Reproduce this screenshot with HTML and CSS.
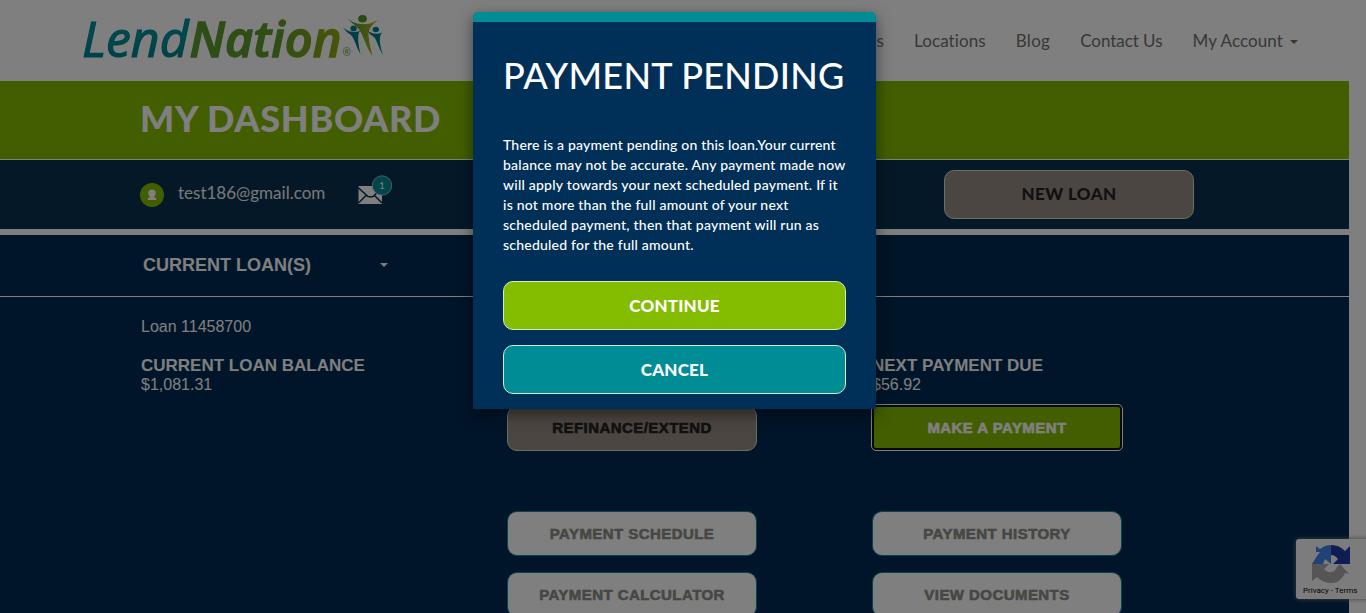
FILE: index.html
```html
<!DOCTYPE html>
<html lang="en">
<head>
<meta charset="utf-8">
<title>My Dashboard</title>
<link rel="stylesheet" href="styles.css">
</head>
<body>
<div class="page">
  <header class="header">
    <svg class="logo" width="310" height="80" viewBox="78 0 310 80" aria-label="LendNation">
      <defs>
        <linearGradient id="teal" x1="0" y1="0" x2="0" y2="1"><stop offset=".5" stop-color="#00929b"/><stop offset="1" stop-color="#007680"/></linearGradient>
        <linearGradient id="green"><stop offset=".55" stop-color="#5c9a2e"/><stop offset="1" stop-color="#94aa12"/></linearGradient>
        <linearGradient id="leaf" x1="0" y1="0" x2="1" y2="0"><stop offset="0" stop-color="#4c8a2b"/><stop offset="1" stop-color="#b0bd20"/></linearGradient>
      </defs>
      <text class="logo-lend" x="82" y="56.500" textLength="106.500" lengthAdjust="spacingAndGlyphs" fill="url(#teal)">Lend</text>
      <text class="logo-nation" x="189.500" y="56.500" textLength="152" lengthAdjust="spacingAndGlyphs" fill="url(#green)" stroke="url(#green)">Nation</text>
      <text class="logo-reg" x="342.500" y="56">®</text>
      <ellipse cx="362.500" cy="18.700" rx="4.400" ry="3.800" fill="#58912a"/>
      <path d="M347.500 18C352 23 360 25.500 370 23.500L378 20C372 25 368 29 368.500 35C369 43 371 50 372.500 56C366 47 364 37 359.500 30C356 25 351 23 347.500 18Z" fill="url(#leaf)"/>
      <ellipse cx="353.600" cy="28.400" rx="3.200" ry="2.900" fill="#007b88"/>
      <path d="M343 27.500C347 31 352 33 358 31.500L360 30.500C357 35 358 43 360.500 54C356 47 355 39 351 35Q346 32 343 27.500Z" fill="#007b88"/>
      <ellipse cx="375.800" cy="29.500" rx="3.200" ry="2.700" fill="#007b88"/>
      <path d="M367 30.500C371 33 376 35 382 32.500C379 36 379 43 383 55C378 47 377 40 374 37Q369 34 367 30.500Z" fill="#007b88"/>
    </svg>
    <nav class="nav">
      <a class="nav-loans">Loans</a><a class="nav-locations">Locations</a><a class="nav-blog">Blog</a><a class="nav-contact">Contact Us</a><a class="nav-account">My Account<i class="caret"></i></a>
    </nav>
  </header>
  <main class="main">
    <section class="banner"><h1>MY DASHBOARD</h1></section>
    <section class="userbar">
      <svg class="avatar" width="24" height="24" viewBox="0 0 24 24"><circle cx="12" cy="12" r="12" fill="#84bd00"/><path d="M12 6.500a3.700 3.700 0 0 0-3.700 3.700c0 1.500.8 2.600 1.700 3.200v.6c-1.500.3-2.300 1.300-2.300 3h8.600c0-1.700-.8-2.700-2.300-3v-.6c.9-.6 1.700-1.700 1.700-3.200A3.700 3.700 0 0 0 12 6.500Z" fill="#fff"/></svg>
      <span class="email">test186@gmail.com</span>
      <svg class="mail" width="36" height="31" viewBox="0 0 36 31"><path d="M.5 11H24V29H.5Z" fill="#fff"/><path d="M0 12.500 10 21.500 12.500 22 15 21.500 24 13M.5 28 8.500 20M24 28 16.500 20.500" fill="none" stroke="#0a304e" stroke-width="1.500"/><circle cx="24" cy="10.500" r="9.700" fill="#008c95" stroke="#ccc" stroke-width=".8"/><text x="24" y="14" text-anchor="middle">1</text></svg>
      <a class="btn tan new-loan"><span>NEW LOAN</span></a>
    </section>
    <section class="loan-select"><strong>CURRENT LOAN(S)</strong><i class="caret"></i></section>
    <section class="loan">
      <div class="col first">
        <p class="number">Loan 11458700</p>
        <strong class="balance">CURRENT LOAN BALANCE</strong><span class="amount">$1,081.31</span>
      </div>
      <div class="col actions">
        <a class="btn tan refinance"><span>REFINANCE/EXTEND</span></a>
        <a class="btn light"><span>PAYMENT SCHEDULE</span></a>
        <a class="btn light"><span>PAYMENT CALCULATOR</span></a>
      </div>
      <div class="col due">
        <strong class="next">NEXT PAYMENT DUE</strong><span class="amount">$56.92</span>
        <a class="btn pay"><span>MAKE A PAYMENT</span></a>
        <a class="btn light"><span>PAYMENT HISTORY</span></a>
        <a class="btn light"><span>VIEW DOCUMENTS</span></a>
      </div>
    </section>
  </main>
</div>
<aside class="recaptcha">
  <svg width="38" height="38" viewBox="0 0 38 38"><path d="M19 0Q13 0 8 4L4 1V7H8L5 11L0 19H11L13 14L19 19Z" fill="#4285e8"/><path d="M19 0A19 19 0 0 1 33 6L38 1V19H21L26 14Q23 10 19 10Z" fill="#1c3aa9"/><path d="M0 19H17L12 24Q15 28 19 27Q23 27 25 22L28 19L37 29L33 28Q29 38 19 38Q11 38 5 32L0 36Z" fill="#ababab"/></svg>
  <span>Privacy - Terms</span>
</aside>
<div class="overlay">
  <div class="modal" role="dialog">
    <h2>PAYMENT PENDING</h2>
    <p><span class="l1">There is a payment pending on this loan.Your current</span><br><span class="l2">balance may not be accurate. Any payment made now</span><br><span class="l3">will apply towards your next scheduled payment. If it</span><br><span class="l4">is not more than the full amount of your next</span><br><span class="l5">scheduled payment, then that payment will run as</span><br><span class="l6">scheduled for the full amount.</span></p>
    <a class="modal-btn continue">CONTINUE</a>
    <a class="modal-btn cancel">CANCEL</a>
  </div>
</div>
</body>
</html>
```
FILE: styles.css
```css
* { box-sizing: border-box; }
body { margin: 0; height: 613px; overflow: hidden; background: #fff; font-family: "Liberation Sans", Arial, sans-serif; }
h1, h2, p { margin: 0; }
.page { height: 613px; overflow: hidden; }
.header { height: 81px; padding: 0 68px 0 78px; display: flex; justify-content: space-between; }
.logo text { font-family: "Open Sans", "Noto Sans", sans-serif; font-style: italic; font-size: 49px; }
.logo .logo-lend { font-weight: 400; stroke: #008690; stroke-width: 1.2px; }
.logo .logo-nation { font-weight: 600; stroke-width: 1.3px; }
.logo .logo-reg { font: 10px "Open Sans", sans-serif; fill: #63972b; }
.nav { display: flex; gap: 30px; padding-top: 30px; font: 400 17px/21px Lato, sans-serif; color: #707070; white-space: nowrap; }
.nav-locations { letter-spacing: .1px; }
.nav-blog { letter-spacing: .3px; }
.nav-contact { letter-spacing: -.05px; }
.nav-account { letter-spacing: .1px; }
.caret { display: inline-block; border: 4px solid transparent; border-top-color: currentColor; border-bottom: 0; }
.nav .caret { margin-left: 7px; vertical-align: 3px; }
.main { width: 1349px; }
.banner { height: 79px; padding: 15px 0 0 140px; background: #84bd00; border-bottom: 1px solid #fff; color: #fff; }
.banner h1 { font: 900 36px/44px Lato, sans-serif; letter-spacing: .7px; }
.userbar { height: 69px; background: #0a304e; display: flex; align-items: flex-start; padding: 10px 0 0 140px; color: #fff; }
.avatar { margin-top: 13px; }
.email { width: 148px; margin: 12px 0 0 14px; font: 400 17px/22px Lato, sans-serif; white-space: nowrap; color: #f0f0f0; }
.mail { margin: 5px 0 0 32px; }
.mail text { font: 10px Lato, sans-serif; fill: #fff; }
.btn { display: flex; flex: none; align-items: center; justify-content: center; width: 250px; height: 45px; border-radius: 10px; border: 1px solid; font-weight: 900; font-size: 15px; letter-spacing: .44px; -webkit-text-stroke: .6px currentColor; }
.tan { background: #998c84; border-color: #d7e1b9; color: #222; }
.new-loan { height: 49px; margin-left: 550px; padding-bottom: 2px; font: 900 17px Lato, sans-serif; letter-spacing: .4px; -webkit-text-stroke: 0; }
.loan-select { height: 62px; margin-top: 6px; padding: 0 0 1px 143px; display: flex; align-items: center; background: #002a52; border-bottom: 1px solid #fff; color: #fff; font-size: 18px; }
.loan-select strong { width: 237px; white-space: nowrap; }
.loan { height: 316px; background: #002a52; color: #fff; display: flex; padding-left: 141px; font-size: 16px; line-height: 19px; }
.col { width: 366px; }
.first, .due { display: flex; flex-direction: column; }
.number { margin: 20px 0; }
.first .balance, .due .next { font-size: 17px; }
.amount { height: 19px; }
.actions { padding-top: 109px; }
.btn + .btn { margin-top: 16px; }
.refinance { padding-bottom: 3px; }
.light { color: #8e8e86; background: #fff; border-color: #008c95; padding-bottom: 1px; }
.refinance + .light { margin-top: 60px; }
.pay + .light { margin-top: 61px; }
.due { padding: 59px 0 0; margin-left: -1px; }
.pay { margin-top: 11px; background: #84bd00; border: 2px solid #111; outline: 1px solid #fff; border-radius: 4px; color: #fff; }
.recaptcha { position: absolute; left: 1296px; top: 539px; width: 82px; height: 60px; border-radius: 3px; background: #f9f9f9; box-shadow: 0 0 5px gray; padding: 6px 0 0 7px; display: flex; flex-direction: column; color: #000; }
.recaptcha svg { margin-left: 9px; }
.recaptcha span { margin-top: 3px; font: 400 8px/10px Roboto, sans-serif; white-space: nowrap; }
.overlay { position: absolute; inset: 0; background: rgba(0,0,0,.5); padding: 12px 0 0 473px; }
.modal { width: 403px; height: 397px; border-top: 10px solid #008c95; border-radius: 5px 5px 0 0; padding: 31px 30px 0; background: #002f57; box-shadow: 0 5px 15px rgba(0,0,0,.5); color: #fff; }
.modal h2 { height: 82px; font: 500 36px/44px Lato, sans-serif; white-space: nowrap; letter-spacing: .28px; }
.modal p { height: 134px; font: 500 14px/20px Lato, sans-serif; white-space: nowrap; letter-spacing: .22px; }
.modal .l1 { letter-spacing: .19px; }
.modal .l2 { letter-spacing: .25px; }
.modal-btn { height: 49px; display: flex; align-items: center; justify-content: center; padding-bottom: 1px; border: 1px solid #d7e9c6; border-radius: 10px; font: 900 17px Lato, sans-serif; letter-spacing: .2px; }
.continue { background: #84bd00; margin-top: 12px; }
.cancel { background: #008c95; margin-top: 15px; }
```
